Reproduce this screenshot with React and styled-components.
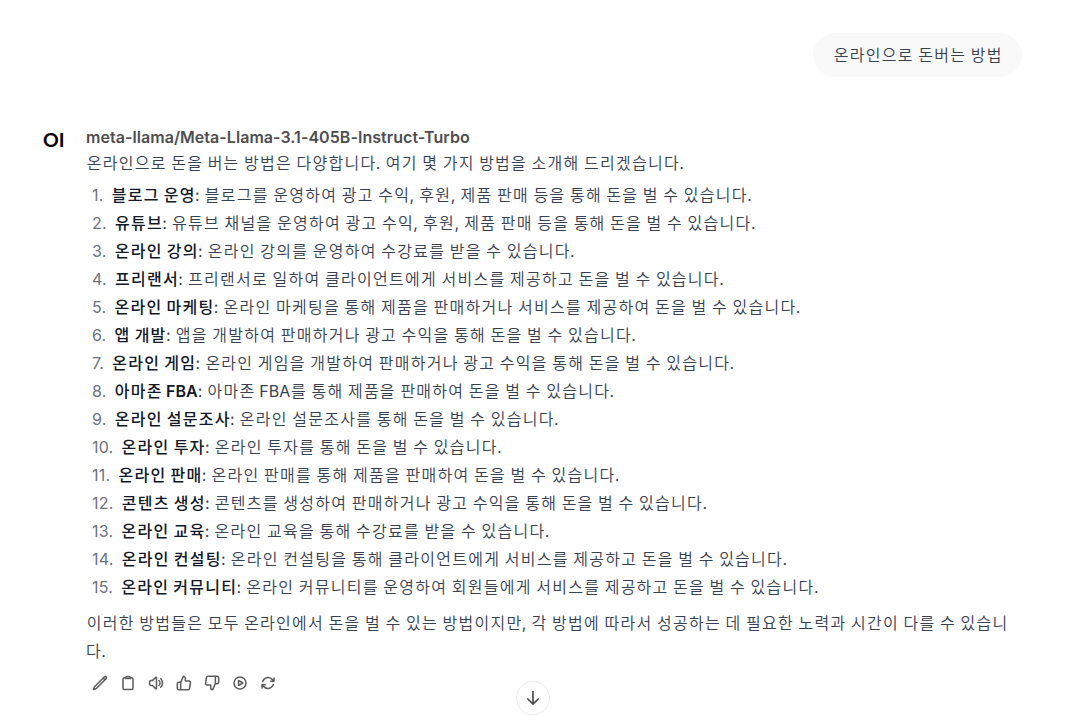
import React from "react";
import styled, { createGlobalStyle } from "styled-components";

const items = [
  { title: "블로그 운영", text: "블로그를 운영하여 광고 수익, 후원, 제품 판매 등을 통해 돈을 벌 수 있습니다." },
  { title: "유튜브", text: "유튜브 채널을 운영하여 광고 수익, 후원, 제품 판매 등을 통해 돈을 벌 수 있습니다." },
  { title: "온라인 강의", text: "온라인 강의를 운영하여 수강료를 받을 수 있습니다." },
  { title: "프리랜서", text: "프리랜서로 일하여 클라이언트에게 서비스를 제공하고 돈을 벌 수 있습니다." },
  { title: "온라인 마케팅", text: "온라인 마케팅을 통해 제품을 판매하거나 서비스를 제공하여 돈을 벌 수 있습니다." },
  { title: "앱 개발", text: "앱을 개발하여 판매하거나 광고 수익을 통해 돈을 벌 수 있습니다." },
  { title: "온라인 게임", text: "온라인 게임을 개발하여 판매하거나 광고 수익을 통해 돈을 벌 수 있습니다." },
  { title: "아마존 FBA", text: "아마존 FBA를 통해 제품을 판매하여 돈을 벌 수 있습니다." },
  { title: "온라인 설문조사", text: "온라인 설문조사를 통해 돈을 벌 수 있습니다." },
  { title: "온라인 투자", text: "온라인 투자를 통해 돈을 벌 수 있습니다." },
  { title: "온라인 판매", text: "온라인 판매를 통해 제품을 판매하여 돈을 벌 수 있습니다." },
  { title: "콘텐츠 생성", text: "콘텐츠를 생성하여 판매하거나 광고 수익을 통해 돈을 벌 수 있습니다." },
  { title: "온라인 교육", text: "온라인 교육을 통해 수강료를 받을 수 있습니다." },
  { title: "온라인 컨설팅", text: "온라인 컨설팅을 통해 클라이언트에게 서비스를 제공하고 돈을 벌 수 있습니다." },
  { title: "온라인 커뮤니티", text: "온라인 커뮤니티를 운영하여 회원들에게 서비스를 제공하고 돈을 벌 수 있습니다." },
];

const icons = [
  ["m16.862 4.487 1.687-1.688a1.875 1.875 0 1 1 2.652 2.652L6.832 19.82a4.5 4.5 0 0 1-1.897 1.13l-2.685.8.8-2.685a4.5 4.5 0 0 1 1.13-1.897L16.863 4.487Zm0 0L19.5 7.125"],
  ["M15.666 3.888A2.25 2.25 0 0 0 13.5 2.25h-3c-1.03 0-1.9.693-2.166 1.638m7.332 0c.055.194.084.4.084.612v0a.75.75 0 0 1-.75.75H9a.75.75 0 0 1-.75-.75v0c0-.212.03-.418.084-.612m7.332 0c.646.049 1.288.11 1.927.184 1.1.128 1.907 1.077 1.907 2.185V19.5a2.25 2.25 0 0 1-2.25 2.25H6.75A2.25 2.25 0 0 1 4.5 19.5V6.257c0-1.108.806-2.057 1.907-2.185a48.208 48.208 0 0 1 1.927-.184"],
  ["M19.114 5.636a9 9 0 0 1 0 12.728M16.463 8.288a5.25 5.25 0 0 1 0 7.424M6.75 8.25l4.72-4.72a.75.75 0 0 1 1.28.53v15.88a.75.75 0 0 1-1.28.53l-4.72-4.72H4.51c-.88 0-1.704-.507-1.938-1.354A9.009 9.009 0 0 1 2.25 12c0-.83.112-1.633.322-2.396C2.806 8.756 3.63 8.25 4.51 8.25H6.75Z"],
  ["M14 9V5a3 3 0 0 0-3-3l-4 9v11h11.28a2 2 0 0 0 2-1.7l1.38-9a2 2 0 0 0-2-2.3zM7 22H4a2 2 0 0 1-2-2v-7a2 2 0 0 1 2-2h3"],
  ["M10 15v4a3 3 0 0 0 3 3l4-9V2H5.72a2 2 0 0 0-2 1.7l-1.38 9a2 2 0 0 0 2 2.3zm7-13h2.67A2.31 2.31 0 0 1 22 4v7a2.31 2.31 0 0 1-2.33 2H17"],
  ["M21 12a9 9 0 1 1-18 0 9 9 0 0 1 18 0Z", "M15.91 11.672a.375.375 0 0 1 0 .656l-5.603 3.113a.375.375 0 0 1-.557-.328V8.887c0-.286.307-.466.557-.327l5.603 3.112Z"],
  ["M16.023 9.348h4.992v-.001M2.985 19.644v-4.992m0 0h4.992m-4.993 0 3.181 3.183a8.25 8.25 0 0 0 13.803-3.7M4.031 9.865a8.25 8.25 0 0 1 13.803-3.7l3.181 3.182m0-4.991v4.99"],
];

// hangul gets wider tracking, latin and punctuation keep their own
function Ko({ children }) {
  return children
    .split(/([가-힣]+)/)
    .map((part, i) => (i % 2 ? <Hangul key={i}>{part}</Hangul> : part));
}

function App() {
  return (
    <Chat>
      <GlobalStyle />
      <UserRow>
        <Bubble>
          <Ko>온라인으로 돈버는 방법</Ko>
        </Bubble>
      </UserRow>
      <Message>
        <Avatar>OI</Avatar>
        <Body>
          <Name>meta-llama/Meta-Llama-3.1-405B-Instruct-Turbo</Name>
          <Paragraph>
            <Ko>온라인으로 돈을 버는 방법은 다양합니다. 여기 몇 가지 방법을 소개해 드리겠습니다.</Ko>
          </Paragraph>
          <List>
            {items.map((item, i) => (
              <Item key={item.title}>
                <Num>{i + 1}.</Num>
                <span>
                  <Strong>
                    <Ko>{item.title}</Ko>
                  </Strong>
                  : <Ko>{item.text}</Ko>
                </span>
              </Item>
            ))}
          </List>
          <Paragraph>
            <Ko>
              이러한 방법들은 모두 온라인에서 돈을 벌 수 있는 방법이지만, 각 방법에 따라서 성공하는 데 필요한 노력과 시간이 다를 수 있습니다.
            </Ko>
          </Paragraph>
          <Actions>
            {icons.map((paths, i) => (
              <ActionButton key={i}>
                <svg viewBox="0 0 24 24">
                  {paths.map((d) => (
                    <path key={d} d={d} />
                  ))}
                </svg>
              </ActionButton>
            ))}
          </Actions>
        </Body>
      </Message>
      <ScrollButton>
        <svg viewBox="0 0 20 20">
          <path d="M10 3.5v12.5M4.8 11l5.2 5.2 5.2-5.2" />
        </svg>
      </ScrollButton>
    </Chat>
  );
}

export default App;

const GlobalStyle = createGlobalStyle`
  body {
    margin: 0;
    background: #fff;
    overflow: hidden;
  }
`;

const Chat = styled.div`
  position: relative;
  box-sizing: border-box;
  width: 1066px;
  height: 716px;
  padding: 33px 44px 0 43px;
  overflow: hidden;
  font-family: Inter, "Noto Sans CJK KR", sans-serif;
  font-size: 16px;
  line-height: 28px;
  color: #374151;
`;

const Hangul = styled.span`
  margin: 0 -0.7px 0 0.7px;
  font-family: "Noto Sans CJK KR", sans-serif;
  font-weight: 350;
  line-height: 1;
  letter-spacing: 1.27px;
`;

const UserRow = styled.div`
  display: flex;
  justify-content: flex-end;
`;

const Bubble = styled.div`
  box-sizing: border-box;
  height: 44px;
  padding: 8px 20px;
  border-radius: 22px;
  background: #f9f9f9;
  white-space: nowrap;
`;

const Message = styled.div`
  display: flex;
  margin-top: 48px;
`;

const Avatar = styled.div`
  flex: none;
  width: 43px;
  padding-top: 1px;
  font-family: Lato, sans-serif;
  font-size: 19.5px;
  font-weight: 700;
  color: #000;
`;

const Body = styled.div`
  flex: 1;
  min-width: 0;
`;

const Name = styled.div`
  height: 24px;
  line-height: 24px;
  font-weight: 600;
  letter-spacing: 0.05px;
  color: #4e4e4e;
`;

const Paragraph = styled.p`
  margin: 0;
  word-break: break-all;
`;

const List = styled.ol`
  margin: 4px 0 8px;
  padding: 0 0 0 6px;
  list-style: none;
`;

const Item = styled.li`
  display: flex;
  white-space: nowrap;
`;

const Strong = styled.strong`
  font-weight: 600;
  color: #111827;

  ${Hangul} {
    font-weight: 500;
  }
`;

const Num = styled.span`
  margin-right: 7.5px;
  letter-spacing: 0.2px;
  color: #6b7280;
`;

const Actions = styled.div`
  display: flex;
  margin-top: 4px;
`;

const ActionButton = styled.button`
  display: flex;
  padding: 6px;
  border: none;
  background: none;

  svg {
    width: 16px;
    height: 16px;
    fill: none;
    stroke: #5d5d5d;
    stroke-width: 2.3;
    stroke-linecap: round;
    stroke-linejoin: round;
  }
`;

const ScrollButton = styled.button`
  position: absolute;
  left: 516px;
  top: 681px;
  display: flex;
  align-items: center;
  justify-content: center;
  width: 34px;
  height: 34px;
  padding: 0;
  border: 1px solid #ececec;
  border-radius: 50%;
  background: #fff;

  svg {
    width: 20px;
    height: 20px;
    fill: none;
    stroke: #4e4e4e;
    stroke-width: 1.7;
    stroke-linecap: round;
    stroke-linejoin: round;
  }
`;
